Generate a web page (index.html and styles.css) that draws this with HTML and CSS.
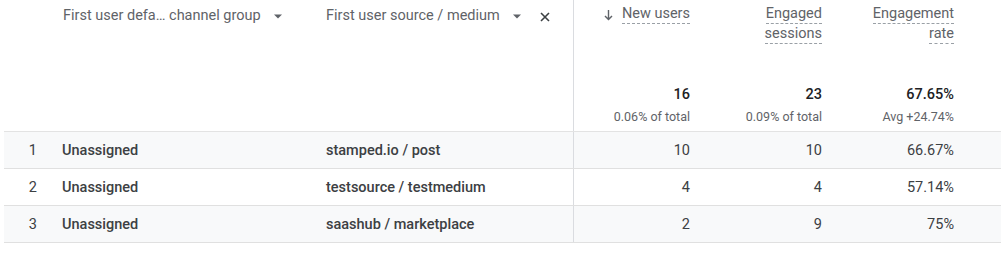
FILE: index.html
```html
<!DOCTYPE html>
<html>
<head>
<meta charset="utf-8">
<link rel="stylesheet" href="styles.css">
</head>
<body>
<div class="table">
  <div class="head">
    <div class="c idx"></div>
    <div class="c dim">
      <span class="hlabel">First user defa… channel group</span>
      <svg class="caret" width="10" height="5" viewBox="0 0 10 5"><path d="M1 0.5h8L5 4.5z" fill="#5f6368"/></svg>
    </div>
    <div class="c dim dim2 sep">
      <span class="hlabel">First user source / medium</span>
      <svg class="caret" width="10" height="5" viewBox="0 0 10 5"><path d="M1 0.5h8L5 4.5z" fill="#5f6368"/></svg>
      <svg class="close" width="10" height="10" viewBox="0 0 10 10"><path d="M1 1L9 9M9 1L1 9" stroke="#3c4043" stroke-width="1.6"/></svg>
    </div>
    <div class="c met">
      <div class="mhead">
        <div class="mline"><svg class="arrow" width="9" height="12" viewBox="0 0 9 12"><path d="M4.5 1v9.5M1 7l3.5 3.6L8 7" fill="none" stroke="#5f6368" stroke-width="1.4"/></svg><span class="dash">New users</span></div>
      </div>
      <div class="tot">
        <div class="tv">16</div>
        <div class="tp">0.06% of total</div>
      </div>
    </div>
    <div class="c met">
      <div class="mhead">
        <div class="mline"><span class="dash">Engaged</span></div>
        <div class="mline"><span class="dash">sessions</span></div>
      </div>
      <div class="tot">
        <div class="tv">23</div>
        <div class="tp">0.09% of total</div>
      </div>
    </div>
    <div class="c met">
      <div class="mhead">
        <div class="mline"><span class="dash">Engagement</span></div>
        <div class="mline"><span class="dash">rate</span></div>
      </div>
      <div class="tot">
        <div class="tv">67.65%</div>
        <div class="tp">Avg +24.74%</div>
      </div>
    </div>
    <div class="c"></div>
  </div>

  <div class="row shade">
    <div class="c idx">1</div>
    <div class="c dim strong">Unassigned</div>
    <div class="c dim dim2 sep strong">stamped.io / post</div>
    <div class="c num">10</div>
    <div class="c num">10</div>
    <div class="c num">66.67%</div>
    <div class="c"></div>
  </div>
  <div class="row">
    <div class="c idx">2</div>
    <div class="c dim strong">Unassigned</div>
    <div class="c dim dim2 sep strong">testsource / testmedium</div>
    <div class="c num">4</div>
    <div class="c num">4</div>
    <div class="c num">57.14%</div>
    <div class="c"></div>
  </div>
  <div class="row shade">
    <div class="c idx">3</div>
    <div class="c dim strong">Unassigned</div>
    <div class="c dim dim2 sep strong">saashub / marketplace</div>
    <div class="c num">2</div>
    <div class="c num">9</div>
    <div class="c num">75%</div>
    <div class="c"></div>
  </div>
</div>
</body>
</html>
```

FILE: styles.css
```css
* { box-sizing: border-box; }
html, body {
  margin: 0;
  padding: 0;
  background: #ffffff;
}
body {
  font-family: Roboto, "Liberation Sans", Arial, sans-serif;
  font-size: 14.5px;
  color: #202124;
  width: 1001px;
  height: 255px;
  overflow: hidden;
}
.table {
  padding-left: 4px;
}
.head, .row {
  display: grid;
  grid-template-columns: 46px 264px 260px 126px 132px 132px 1fr;
}
.head {
  height: 132px;
  border-bottom: 1px solid #e3e3e3;
}
.row {
  height: 37px;
  border-bottom: 1px solid #e0e0e0;
  align-items: stretch;
}
.row.shade {
  background: #f8f9fa;
}
.c {
  min-width: 0;
}
.sep {
  border-right: 1px solid #dadce0;
}
.head .dim {
  display: flex;
  align-items: flex-start;
  padding: 6px 0 0 13px;
  line-height: 20px;
  color: #5f6368;
}
.head .dim2 {
  padding-left: 12px;
}
.hlabel {
  white-space: nowrap;
}
.caret {
  margin: 8px 0 0 12px;
  flex: none;
}
.close {
  margin: 6px 0 0 18px;
  flex: none;
}
.met {
  display: flex;
  flex-direction: column;
  justify-content: space-between;
  padding: 5px 10px 0 0;
  text-align: right;
  color: #5f6368;
}
.mline {
  line-height: 20px;
  height: 20px;
  display: flex;
  justify-content: flex-end;
  align-items: flex-start;
}
.dash {
  display: inline-block;
  line-height: 18px;
  border-bottom: 1px dashed #9aa0a6;
}
.arrow {
  margin: 4px 9px 0 0;
}
.tot {
  padding-bottom: 3px;
}
.tv {
  line-height: 22px;
  color: #202124;
  font-weight: 500;
  font-size: 14.5px;
}
.tp {
  font-size: 12.5px;
  line-height: 22px;
  color: #5f6368;
}
.row .c {
  display: flex;
  align-items: center;
}
.row .idx {
  justify-content: flex-end;
  padding-right: 13px;
  color: #3c4043;
}
.row .dim {
  padding-left: 12px;
}
.strong {
  font-weight: 500;
  color: #3c4043;
}
.row .num {
  justify-content: flex-end;
  padding-right: 10px;
  color: #3c4043;
}
```
